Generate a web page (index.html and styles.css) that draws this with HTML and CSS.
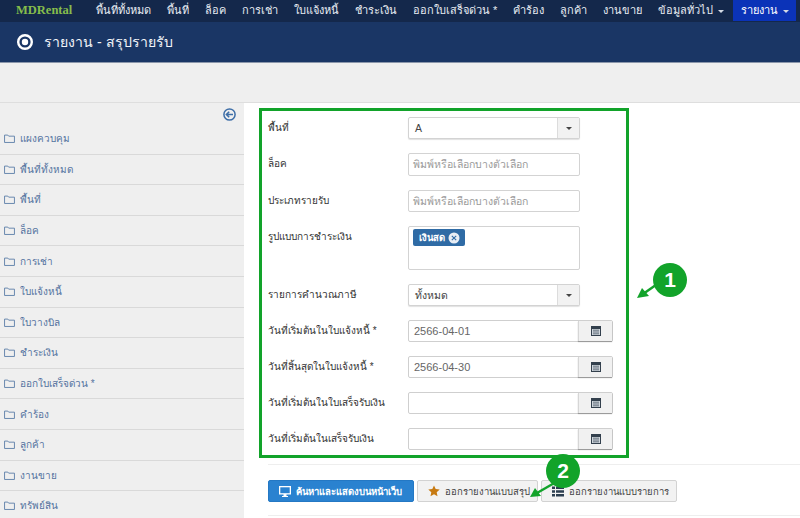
FILE: index.html
```html
<!DOCTYPE html>
<html lang="th">
<head>
<meta charset="utf-8">
<title>รายงาน - สรุปรายรับ</title>
<link rel="stylesheet" href="styles.css">
</head>
<body>
<nav class="navbar">
  <span class="brand">MDRental</span>
  <ul class="menu">
    <li>พื้นที่ทั้งหมด</li>
    <li>พื้นที่</li>
    <li>ล็อค</li>
    <li>การเช่า</li>
    <li>ใบแจ้งหนี้</li>
    <li>ชำระเงิน</li>
    <li>ออกใบเสร็จด่วน *</li>
    <li>คำร้อง</li>
    <li>ลูกค้า</li>
    <li>งานขาย</li>
    <li>ข้อมูลทั่วไป <i class="caret"></i></li>
    <li class="active">รายงาน <i class="caret"></i></li>
  </ul>
</nav>
<header class="titlebar">
  <svg class="title-icon" width="18" height="18" viewBox="0 0 18 18"><circle cx="9" cy="9" r="6.8" fill="none" stroke="#fff" stroke-width="2.4"/><circle cx="9" cy="9" r="3.2" fill="#fff"/></svg>
  <h1>รายงาน - สรุปรายรับ</h1>
</header>
<div class="toolbar"></div>
<div class="layout">
  <aside class="sidebar">
    <div class="collapse">
      <svg width="13" height="13" viewBox="0 0 13 13"><circle cx="6.5" cy="6.5" r="5.6" fill="none" stroke="#3f6fa8" stroke-width="1.5"/><path d="M10 6.5H3.6M6.2 3.7 3.4 6.5l2.8 2.8" fill="none" stroke="#3f6fa8" stroke-width="1.6"/></svg>
    </div>
    <ul class="side-list">
      <li><svg class="folder" viewBox="0 0 12 10"><path d="M.5 1.2h3.6l1 1.2h6.4v7H.5z"/></svg>แผงควบคุม</li>
      <li><svg class="folder" viewBox="0 0 12 10"><path d="M.5 1.2h3.6l1 1.2h6.4v7H.5z"/></svg>พื้นที่ทั้งหมด</li>
      <li><svg class="folder" viewBox="0 0 12 10"><path d="M.5 1.2h3.6l1 1.2h6.4v7H.5z"/></svg>พื้นที่</li>
      <li><svg class="folder" viewBox="0 0 12 10"><path d="M.5 1.2h3.6l1 1.2h6.4v7H.5z"/></svg>ล็อค</li>
      <li><svg class="folder" viewBox="0 0 12 10"><path d="M.5 1.2h3.6l1 1.2h6.4v7H.5z"/></svg>การเช่า</li>
      <li><svg class="folder" viewBox="0 0 12 10"><path d="M.5 1.2h3.6l1 1.2h6.4v7H.5z"/></svg>ใบแจ้งหนี้</li>
      <li><svg class="folder" viewBox="0 0 12 10"><path d="M.5 1.2h3.6l1 1.2h6.4v7H.5z"/></svg>ใบวางบิล</li>
      <li><svg class="folder" viewBox="0 0 12 10"><path d="M.5 1.2h3.6l1 1.2h6.4v7H.5z"/></svg>ชำระเงิน</li>
      <li><svg class="folder" viewBox="0 0 12 10"><path d="M.5 1.2h3.6l1 1.2h6.4v7H.5z"/></svg>ออกใบเสร็จด่วน *</li>
      <li><svg class="folder" viewBox="0 0 12 10"><path d="M.5 1.2h3.6l1 1.2h6.4v7H.5z"/></svg>คำร้อง</li>
      <li><svg class="folder" viewBox="0 0 12 10"><path d="M.5 1.2h3.6l1 1.2h6.4v7H.5z"/></svg>ลูกค้า</li>
      <li><svg class="folder" viewBox="0 0 12 10"><path d="M.5 1.2h3.6l1 1.2h6.4v7H.5z"/></svg>งานขาย</li>
      <li><svg class="folder" viewBox="0 0 12 10"><path d="M.5 1.2h3.6l1 1.2h6.4v7H.5z"/></svg>ทรัพย์สิน</li>
    </ul>
  </aside>
  <main class="content">
    <form class="report-form">
      <div class="row"><label>พื้นที่</label><div class="field select"><span>A</span><b><i class="caret dark"></i></b></div></div>
      <div class="row"><label>ล็อค</label><div class="field plain taller"><span class="ph">พิมพ์หรือเลือกบางตัวเลือก</span></div></div>
      <div class="row"><label>ประเภทรายรับ</label><div class="field plain"><span class="ph">พิมพ์หรือเลือกบางตัวเลือก</span></div></div>
      <div class="row tall"><label>รูปแบบการชำระเงิน</label><div class="field plain area"><span class="tag">เงินสด<svg width="12" height="12" viewBox="0 0 12 12"><circle cx="6" cy="6" r="5.5" fill="#e8eef5"/><path d="M3.8 3.8l4.4 4.4M8.2 3.8 3.8 8.2" stroke="#2f6ba5" stroke-width="1.1"/></svg></span></div></div>
      <div class="row"><label>รายการคำนวณภาษี</label><div class="field select"><span>ทั้งหมด</span><b><i class="caret dark"></i></b></div></div>
      <div class="row"><label>วันที่เริ่มต้นในใบแจ้งหนี้ *</label><div class="date"><span>2566-04-01</span><b><svg class="cal" viewBox="0 0 10 10"><path d="M0 0h10v10H0z" fill="#33404d"/><path d="M1 3h8v6H1z" fill="#cfd6dc"/><path d="M2 4.200h6M2 6h6M2 7.800h6" stroke="#5b6874" stroke-width=".9"/></svg></b></div></div>
      <div class="row"><label>วันที่สิ้นสุดในใบแจ้งหนี้ *</label><div class="date"><span>2566-04-30</span><b><svg class="cal" viewBox="0 0 10 10"><path d="M0 0h10v10H0z" fill="#33404d"/><path d="M1 3h8v6H1z" fill="#cfd6dc"/><path d="M2 4.200h6M2 6h6M2 7.800h6" stroke="#5b6874" stroke-width=".9"/></svg></b></div></div>
      <div class="row"><label>วันที่เริ่มต้นในใบเสร็จรับเงิน</label><div class="date"><span></span><b><svg class="cal" viewBox="0 0 10 10"><path d="M0 0h10v10H0z" fill="#33404d"/><path d="M1 3h8v6H1z" fill="#cfd6dc"/><path d="M2 4.200h6M2 6h6M2 7.800h6" stroke="#5b6874" stroke-width=".9"/></svg></b></div></div>
      <div class="row"><label>วันที่เริ่มต้นในเสร็จรับเงิน</label><div class="date"><span></span><b><svg class="cal" viewBox="0 0 10 10"><path d="M0 0h10v10H0z" fill="#33404d"/><path d="M1 3h8v6H1z" fill="#cfd6dc"/><path d="M2 4.200h6M2 6h6M2 7.800h6" stroke="#5b6874" stroke-width=".9"/></svg></b></div></div>
    </form>
    <div class="actions">
      <button type="button" class="btn primary"><svg width="12" height="11" viewBox="0 0 12 11"><path d="M0 0h12v8.500H7.500V10H9v1H3v-1h1.500V8.500H0z" fill="#fff"/><path d="M1.300 1.300h9.400v5.900H1.300z" fill="#2a82d0"/></svg>ค้นหาและแสดงบนหน้าเว็บ</button>
      <button type="button" class="btn summary"><svg width="12" height="12" viewBox="0 0 12 12"><path d="M6 .4l1.700 3.700 4 .5-3 2.700.8 4L6 9.300l-3.500 2 .8-4-3-2.700 4-.5z" fill="#c77a12"/></svg>ออกรายงานแบบสรุป</button>
      <button type="button" class="btn detail"><svg width="12" height="11" viewBox="0 0 12 11"><path d="M0 .5h3v2.500H0zM4 .5h8v2.500H4zM0 4.200h3v2.500H0zM4 4.200h8v2.500H4zM0 8h3v2.500H0zM4 8h8v2.500H4z" fill="#2c3e50"/></svg>ออกรายงานแบบรายการ</button>
    </div>
  </main>
</div>
<svg class="callout one" width="52" height="40" viewBox="0 0 52 40"><path d="M26 18 6 32" stroke="#12a32a" stroke-width="2.500"/><path d="M0 36l5-10 7 8z" fill="#12a32a"/></svg>
<span class="badge b1">1</span>
<svg class="callout two" width="40" height="26" viewBox="0 0 40 26"><path d="M34 4 8 19" stroke="#12a32a" stroke-width="2.500"/><path d="M1 23l5-9 6 8z" fill="#12a32a"/></svg>
<span class="badge b2">2</span>
</body>
</html>
```
FILE: styles.css
```css
* { box-sizing: border-box; }
html, body { margin: 0; padding: 0; }
body {
  width: 800px;
  height: 518px;
  overflow: hidden;
  position: relative;
  background: #fff;
  font-family: "Liberation Sans", "Open Sans", "Noto Sans", sans-serif;
  font-size: 11px;
  color: #333;
}
ul { list-style: none; margin: 0; padding: 0; }

.navbar {
  height: 22px;
  background: #14284b;
  display: flex;
  align-items: flex-start;
  padding-left: 16px;
}
.brand {
  width: 72px;
  font-family: "Liberation Serif", serif;
  font-weight: 700;
  font-size: 12.5px;
  line-height: 20px;
  color: #86bd4b;
}
.menu { display: flex; }
.menu li {
  height: 21px;
  padding: 0 8px;
  line-height: 20px;
  color: #e8edf3;
  font-size: 11px;
  white-space: nowrap;
}
.menu li.active { width: 63px; background: #0b33b8; margin-left: 1px; color: #fff; }
.caret {
  display: inline-block;
  vertical-align: middle;
  margin-left: 2px;
  border-top: 3px solid #d5dbe5;
  border-left: 3px solid transparent;
  border-right: 3px solid transparent;
}
.caret.dark { border-top-color: #444; margin: 0; }

.titlebar {
  height: 41px;
  background: #1a3665;
  border-bottom: 1px solid #8b97ab;
  display: flex;
  align-items: center;
  gap: 10px;
  padding-left: 16px;
}
.title-icon { flex: none; }
.titlebar h1 {
  margin: 0;
  font-size: 14.1px;
  font-weight: 400;
  color: #f2f4f8;
}
.toolbar {
  height: 40px;
  background: #efefef;
  border-bottom: 1px solid #dedede;
}

.layout { display: flex; height: 415px; }
.sidebar {
  width: 244px;
  flex: none;
  background: #efefef;
  overflow: hidden;
}
.collapse {
  height: 21px;
  padding: 5px 8px 0 0;
}
.collapse svg { display: block; margin-left: auto; }
.side-list li {
  height: 30.6px;
  border-bottom: 1px solid #d9d9d9;
  display: flex;
  align-items: center;
  gap: 5px;
  padding-left: 4px;
  color: #54739f;
  font-size: 10px;
  white-space: nowrap;
}
.folder {
  width: 11px;
  height: 9px;
  flex: none;
  fill: none;
  stroke: #5b7ea8;
  stroke-width: 1;
}

.content { flex: 1; padding: 5px 0 0 15px; }
.report-form {
  width: 370px;
  height: 350px;
  border: 3px solid #12a32a;
  padding: 6px 0 0 6px;
  display: flex;
  flex-direction: column;
  gap: 14px;
}
.row { display: flex; min-height: 22px; }
.row label {
  width: 140px;
  flex: none;
  font-size: 10px;
  line-height: 22px;
  color: #333;
  white-space: nowrap;
}
.field {
  width: 172px;
  height: 22px;
  display: flex;
  align-items: center;
  background: #fff;
  border: 1px solid #d3d3d3;
  border-radius: 2px;
  font-size: 10.5px;
  color: #444;
}
.taller { height: 23px; }
.select { box-shadow: 0 1px 1px rgba(0,0,0,.12); padding-left: 6px; }
.select span { flex: 1; }
.select b {
  width: 22px;
  height: 100%;
  background: #f2f2f2;
  border-left: 1px solid #dcdcdc;
  display: flex;
  align-items: center;
  justify-content: center;
}
.plain { padding-left: 4px; }
.ph { color: #9a9a9a; }
.tall { min-height: 44px; }
.area { height: 44px; align-items: flex-start; padding: 2px 4px; }
.tag {
  display: inline-flex;
  align-items: center;
  gap: 3px;
  height: 17px;
  padding: 0 5px 0 6px;
  background: #2f6ba5;
  color: #fff;
  border-radius: 2px;
  font-size: 9.5px;
  font-weight: 600;
}
.date {
  width: 205px;
  height: 22px;
  display: flex;
  border: 1px solid #cfcfcf;
  border-radius: 2px;
  font-size: 11px;
  color: #666;
}
.date span { flex: 1; padding-left: 5px; line-height: 20px; }
.date b {
  width: 34px;
  background: #f1f1f1;
  border-left: 1px solid #d6d6d6;
  box-shadow: 0 1px 1px rgba(0,0,0,.25);
  display: flex;
  align-items: center;
  justify-content: center;
}
.cal { width: 10px; height: 10px; }

.actions {
  width: 532px;
  margin: 6px 0 0 9px;
  padding: 15px 0 13px;
  border-top: 1px solid #eee;
  border-bottom: 1px solid #eee;
  display: flex;
  gap: 3px;
}
.btn {
  height: 22px;
  padding: 0 0 0 10px;
  display: inline-flex;
  align-items: center;
  gap: 5px;
  font: inherit;
  font-size: 9.5px;
  color: #444;
  background: #f2f2f2;
  border: 1px solid #d2d2d2;
  border-radius: 2px;
  white-space: nowrap;
}
.btn.primary { width: 146px; background: #2a82d0; border-color: #2478c4; color: #fff; font-weight: 600; }
.btn.summary { width: 121px; }
.btn.detail { width: 136px; }

.callout { position: absolute; }
.callout.one { left: 637px; top: 262px; }
.callout.two { left: 529px; top: 474px; }
.badge {
  position: absolute;
  width: 34px;
  height: 34px;
  border-radius: 50%;
  background: #12a32a;
  color: #fff;
  font-size: 21px;
  font-weight: 700;
  line-height: 34px;
  text-align: center;
}
.b1 { left: 653px; top: 263px; }
.b2 { left: 546px; top: 454px; }
```
